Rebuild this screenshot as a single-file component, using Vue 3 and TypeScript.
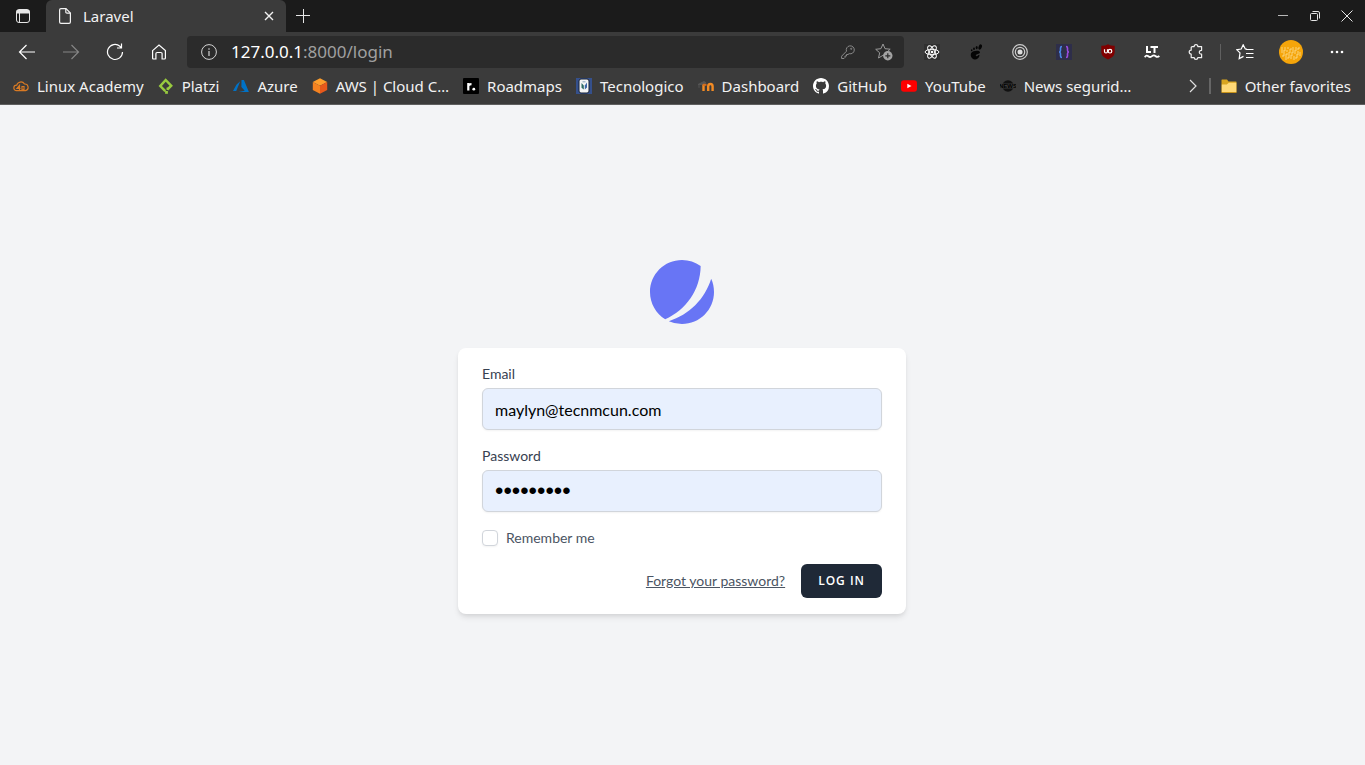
<script setup lang="ts">
import { ref } from 'vue'

interface Bookmark {
  label: string
  icon: string
}

const email = ref('maylyn@tecnmcun.com')
const password = ref('password1')
const remember = ref(false)

const bookmarks: Bookmark[] = [
  { label: 'Linux Academy', icon: 'cloud' },
  { label: 'Platzi', icon: 'platzi' },
  { label: 'Azure', icon: 'azure' },
  { label: 'AWS | Cloud C…', icon: 'aws' },
  { label: 'Roadmaps', icon: 'roadmaps' },
  { label: 'Tecnologico', icon: 'tec' },
  { label: 'Dashboard', icon: 'moodle' },
  { label: 'GitHub', icon: 'github' },
  { label: 'YouTube', icon: 'youtube' },
  { label: 'News segurid…', icon: 'news' },
]

const sparkles = Array.from({ length: 46 }, (_, i) => ({
  x: 3 + ((i * 7) % 19),
  y: 8 + ((i * 5 + Math.floor(i / 6)) % 12),
})).filter((p) => (p.x - 12) ** 2 + (p.y - 12) ** 2 < 100)
</script>

<template>
  <div class="window">
    <header class="chrome">
      <div class="tabbar">
        <button class="workspace" type="button" aria-label="Tab actions">
          <svg width="16" height="16" viewBox="0 0 16 16" fill="none" stroke="#e6e6e6">
            <rect x="1.500" y="1.500" width="13" height="13" rx="2.500" />
            <path d="M2 2.500h12v2.500H2z" fill="#e6e6e6" />
            <path d="M4.500 5v9" />
          </svg>
        </button>
        <div class="tab">
          <svg width="16" height="16" viewBox="0 0 16 16" fill="none" stroke="#f2f2f2" stroke-width="1.200">
            <path d="M4 .6h5L13.400 5v9q0 1.400-1.400 1.400H4Q2.600 15.400 2.600 14V2Q2.600.6 4 .6z" />
            <path d="M8.800.8V4q0 1.200 1.200 1.200h3.200" />
          </svg>
          <span class="tab-title">Laravel</span>
          <button class="tab-close" type="button" aria-label="Close tab">
            <svg width="10" height="10" viewBox="0 0 10 10" stroke="#f2f2f2" stroke-width="1.400">
              <path d="M1 1l8 8M9 1L1 9" />
            </svg>
          </button>
        </div>
        <button class="new-tab" type="button" aria-label="New tab">
          <svg width="14" height="14" viewBox="0 0 14 14" stroke="#e6e6e6"><path d="M7.500 0v14M0 6.500h14" /></svg>
        </button>
        <div class="window-controls">
          <button type="button" aria-label="Minimize">
            <svg width="12" height="12" viewBox="0 0 12 12"><path d="M1 5.500h10" stroke="#b8b8b8" /></svg>
          </button>
          <button type="button" aria-label="Restore">
            <svg width="12" height="12" viewBox="0 0 12 12" fill="none" stroke="#e6e6e6">
              <rect x="1.500" y="3.500" width="7" height="7" rx="1" />
              <path d="M3.500 1.500H9q1.500 0 1.500 1.500v5.500" />
            </svg>
          </button>
          <button type="button" aria-label="Close window">
            <svg width="12" height="12" viewBox="0 0 12 12" stroke="#e6e6e6"><path d="M.5.5l11 11M11.500.5l-11 11" /></svg>
          </button>
        </div>
      </div>

      <nav class="toolbar" aria-label="Browser toolbar">
        <button class="tool" type="button" aria-label="Back">
          <svg width="18" height="16" viewBox="0 0 18 16" fill="none" stroke="#fff" stroke-width="1.200"><path d="M17 8H1.500M8.500 1l-7 7 7 7" /></svg>
        </button>
        <button class="tool" type="button" aria-label="Forward" disabled>
          <svg width="18" height="16" viewBox="0 0 18 16" fill="none" stroke="#858585" stroke-width="1.200"><path d="M1 8h15.500M9.500 1l7 7-7 7" /></svg>
        </button>
        <button class="tool" type="button" aria-label="Refresh">
          <svg width="18" height="18" viewBox="0 0 18 18" fill="none" stroke="#fff" stroke-width="1.200">
            <path d="M16.500 9a7.500 7.500 0 1 1-2.600-5.700L15 4.500M15.500.5v4.500H11" />
          </svg>
        </button>
        <button class="tool" type="button" aria-label="Home">
          <svg width="16" height="16" viewBox="0 0 16 16" fill="none" stroke="#fff" stroke-width="1.200">
            <path d="M1.600 6.600L8 1l6.400 5.600V14q0 1-1 1h-2.300V9.700q0-1.200-1.200-1.200H6.100q-1.200 0-1.200 1.200V15H2.600q-1 0-1-1z" />
          </svg>
        </button>

        <div class="address">
          <svg width="16" height="16" viewBox="0 0 16 16" fill="none" stroke="#d4d4d4">
            <circle cx="8" cy="8" r="7.400" /><path d="M8 7v5M8 4.300v1.400" stroke-width="1.200" />
          </svg>
          <a class="url" href="#"><span class="host">127.0.0.1</span>:8000/login</a>
          <button class="addr-btn" type="button" aria-label="Saved passwords">
            <svg width="14" height="14" viewBox="0 0 14 14" fill="none" stroke="#8a8a8a">
              <path d="M5.500 6.200A4 4 0 1 1 8.200 8.700L7 9.500H5.500V11H4v1.500L3 13.500H.6v-2.300z" stroke-linejoin="round" />
              <circle cx="10.200" cy="3.800" r=".6" />
            </svg>
          </button>
          <button class="addr-btn" type="button" aria-label="Add to favorites">
            <svg width="18" height="18" viewBox="0 0 18 18" fill="none" stroke="#999">
              <path d="M8 1l2 4.700 5.200.5-4 3.500.4 1.800-3.600.8L3.500 15l1.200-5.200-4-3.500 5.200-.6z" stroke-linejoin="round" />
              <circle cx="12.800" cy="12.800" r="4.700" fill="#a3a3a3" stroke="none" />
              <path d="M12.800 10.300v5M10.300 12.800h5" stroke="#2b2b2b" stroke-width="1.200" />
            </svg>
          </button>
        </div>

        <button class="tool" type="button" aria-label="React Developer Tools">
          <svg width="16" height="16" viewBox="0 0 16 16" fill="none" stroke="#fff">
            <rect width="16" height="16" fill="#303030" stroke="none" />
            <ellipse cx="8" cy="8" rx="6.900" ry="2.700" />
            <ellipse cx="8" cy="8" rx="6.900" ry="2.700" transform="rotate(60 8 8)" />
            <ellipse cx="8" cy="8" rx="6.900" ry="2.700" transform="rotate(120 8 8)" />
            <circle cx="8" cy="8" r="1.300" fill="#fff" stroke="none" />
          </svg>
        </button>
        <button class="tool" type="button" aria-label="GNOME Shell integration">
          <svg width="16" height="16" viewBox="0 0 16 16" fill="#050505">
            <path d="M3.200 9C5 6 12.500 6 12 8.500c-.4 1.700-4.400 1.500-4.200 3 .2 1 1.800.8 2.400-.2.600-.8 1.600-.4 1.200.7-.8 2.300-2.700 3.600-4.700 3.400C3.900 15.100 1.800 12 3.200 9z" />
            <ellipse cx="12.200" cy="3" rx="1.600" ry="2.700" transform="rotate(20 12.200 3)" />
            <ellipse cx="8.700" cy="3.600" rx="1" ry="1.600" />
            <ellipse cx="6" cy="4.700" rx=".9" ry="1.200" /><ellipse cx="3.700" cy="6.200" rx=".8" ry="1" />
          </svg>
        </button>
        <button class="tool" type="button" aria-label="Recorder">
          <svg width="16" height="16" viewBox="0 0 16 16" fill="none" stroke="#ccc" stroke-width="1.200">
            <circle cx="8" cy="8" r="7.300" /><circle cx="8" cy="8" r="4.700" /><circle cx="8" cy="8" r="2.500" fill="#ddd" stroke="none" />
          </svg>
        </button>
        <button class="tool" type="button" aria-label="JSON viewer">
          <svg width="16" height="16" viewBox="0 0 16 16" fill="none" stroke-width="1.600">
            <rect width="16" height="16" fill="#2e2e4a" />
            <path d="M6 2.500Q4.500 2.500 4.500 4v2.300Q4.500 8 3 8 4.500 8 4.500 9.700V12q0 1.500 1.500 1.500" stroke="#4a86e8" />
            <path d="M10 2.500Q11.500 2.500 11.500 4v2.300Q11.500 8 13 8 11.500 8 11.500 9.700V12q0 1.500-1.500 1.500" stroke="#9a4be0" />
          </svg>
        </button>
        <button class="tool" type="button" aria-label="uBlock Origin">
          <svg width="16" height="16" viewBox="0 0 16 16" fill="none">
            <path d="M8 .3q3 1.700 6.700 1.500v6.700q-.4 4.300-6.700 7-6.300-2.700-6.700-7V1.800Q5 2 8 .3z" fill="#800000" />
            <path d="M4.500 5.200v2.300q0 1.500 1.500 1.500t1.500-1.500V5.200" stroke="#fff" stroke-width="1.200" />
            <circle cx="10" cy="7.200" r="1.800" stroke="#fff" stroke-width="1.200" />
          </svg>
        </button>
        <button class="tool" type="button" aria-label="LanguageTool">
          <svg width="16" height="16" viewBox="0 0 16 16" fill="none" stroke="#fff" stroke-width="2">
            <path d="M3 2v6h4M6.500 3H14M10.500 3v6" />
            <path d="M.7 13.200q1.700-2.600 3.600-1t3.700 0 3.700 0 3.600-.4" stroke-width="1.800" />
          </svg>
        </button>
        <button class="tool" type="button" aria-label="Extensions">
          <svg width="16" height="16" viewBox="0 0 16 16" fill="none" stroke="#f0f0f0" stroke-width="1.200">
            <path d="M4.200 2.600h2q-.1-1.900 1.800-1.900t1.800 1.900h3.800v3.700q-2.300 0-2.300 1.900t2.300 1.900v3.600H9.800q0 1.700-1.800 1.700t-1.800-1.700h-3V10q-2 0-2-1.900t2-1.900V3.600q0-1 1-1z" stroke-linejoin="round" />
          </svg>
        </button>
        <span class="divider"></span>
        <button class="tool" type="button" aria-label="Favorites">
          <svg width="18" height="16" viewBox="0 0 18 16" fill="none" stroke="#fff">
            <path d="M10.800 5.200L9.300 5 7.200.8 5.200 5 .8 5.700 4 8.900l-.8 5.700L7.500 12.400M10 5.500h7.500M10 9.500h7.500M10 13.500h7.500" stroke-width="1.200" />
          </svg>
        </button>
        <button class="tool profile" type="button" aria-label="Profile">
          <svg width="24" height="24" viewBox="0 0 24 24">
            <circle cx="12" cy="12" r="12" fill="#f5a50a" />
            <circle v-for="(s, i) in sparkles" :key="i" :cx="s.x" :cy="s.y" r=".7" fill="#ffe6a3" />
          </svg>
        </button>
        <button class="tool" type="button" aria-label="Settings and more">
          <svg width="14" height="4" viewBox="0 0 14 4" fill="#fff"><circle cx="2" cy="2" r="1.300" /><circle cx="7" cy="2" r="1.300" /><circle cx="12" cy="2" r="1.300" /></svg>
        </button>
      </nav>

      <nav class="bookmarks" aria-label="Favorites bar">
        <a v-for="b in bookmarks" :key="b.label" class="bookmark" href="#">
          <svg width="16" height="16" viewBox="0 0 16 16" fill="none">
            <g v-if="b.icon === 'cloud'" stroke="#d87a24" stroke-width="1.200">
              <path d="M3.500 12.700a2.700 2.700 0 0 1 .2-5.500A4.300 4.300 0 0 1 11.500 6a3.400 3.400 0 0 1 1 6.700z" />
              <path d="M6.500 12V7.500L4 10.500h3.500M9 8.500v3l2 .5V8.500z" />
            </g>
            <g v-else-if="b.icon === 'platzi'" stroke="#98ca3f" stroke-width="2.500">
              <path d="M9.400 11.600L13.200 7.700 7.700 2 2.300 8l5 5.200" />
              <path d="M8.500 13v2.800" stroke-width="2.800" />
              <path d="M9.600 9.500v2.500" stroke-width="2" />
            </g>
            <g v-else-if="b.icon === 'azure'" fill="#0072c6">
              <path d="M7.200 3.300L3.400 6.700 0 13h3.200z" /><path d="M8.500 2l2.400 0 5 12H5.700l6-1.200L8.400 9z" />
            </g>
            <g v-else-if="b.icon === 'aws'">
              <path d="M8 .2l7.200 3.700L8 7.800.8 3.900z" fill="#ff9e2c" /><path d="M.8 3.900L8 7.800v8L.8 12z" fill="#f58220" /><path d="M15.200 3.900L8 7.800v8l7.200-3.800z" fill="#e8591b" />
            </g>
            <g v-else-if="b.icon === 'roadmaps'">
              <rect width="16" height="16" rx="1" fill="#000" />
              <path d="M5.300 12.500V5M5.300 8q.4-1.800 3.200-1.800" stroke="#fff" stroke-width="2.200" /><circle cx="10.800" cy="11.200" r="1.400" fill="#fff" />
            </g>
            <g v-else-if="b.icon === 'tec'">
              <rect width="16" height="16" fill="#35508c" /><rect x="3" y="1" width="10" height="14" rx="2" fill="#f4f4f4" stroke="#172033" />
              <path d="M5.500 5l2.300 2.500v4L5.500 9.700z" fill="#2b6a63" /><path d="M11 4.500L8.800 7.500v4L11 9.500z" fill="#3d68a8" /><path d="M6.500 3h3v1.500h-3z" fill="#a9bccd" />
            </g>
            <g v-else-if="b.icon === 'moodle'">
              <path d="M0 6.500L6 3.500l2 1.200-3.500 1.800zM1 6.800v3" fill="#555" stroke="#555" />
              <path d="M5.500 13V6.500M10.200 13V8.500q0-2.500 2.200-2.500t2.200 2.500V13" stroke="#f38b24" stroke-width="2.400" />
              <path d="M5 6.800h3.500" stroke="#d66c1d" stroke-width="2" />
            </g>
            <path v-else-if="b.icon === 'github'" fill="#fff" d="M8 0C3.580 0 0 3.580 0 8c0 3.540 2.290 6.530 5.470 7.590.4.070.55-.17.55-.38 0-.19-.01-.82-.01-1.490-2.010.37-2.530-.49-2.690-.94-.09-.23-.48-.94-.82-1.130-.28-.15-.68-.52-.01-.53.63-.01 1.080.58 1.230.82.72 1.210 1.870.87 2.330.66.070-.52.280-.87.510-1.070-1.780-.2-3.640-.89-3.640-3.950 0-.87.310-1.590.82-2.150-.08-.2-.36-1.020.08-2.120 0 0 .67-.21 2.200.82.640-.18 1.320-.27 2-.27s1.360.09 2 .27c1.530-1.040 2.200-.82 2.200-.82.440 1.100.160 1.920.080 2.120.510.560.820 1.270.820 2.150 0 3.070-1.870 3.750-3.650 3.950.290.250.540.730.540 1.480 0 1.070-.01 1.930-.01 2.200 0 .21.150.460.550.380A8.010 8.010 0 0 0 16 8c0-4.420-3.580-8-8-8z" />
            <g v-else-if="b.icon === 'youtube'">
              <rect y="2.300" width="16" height="11.400" rx="3" fill="#f00" /><path d="M6.300 5.700L10.500 8l-4.200 2.300z" fill="#fff" />
            </g>
            <g v-else>
              <circle cx="8" cy="8" r="5.800" fill="#111" />
              <path d="M0 8h16" stroke="#3b3b3b" stroke-width="5" />
              <text x="8" y="10" text-anchor="middle" class="news">NEWS</text>
            </g>
          </svg>
          <span>{{ b.label }}</span>
        </a>
        <button class="overflow" type="button" aria-label="More favorites">
          <svg width="8" height="14" viewBox="0 0 8 14" fill="none" stroke="#e0e0e0" stroke-width="1.200"><path d="M1 1l6 6-6 6" /></svg>
        </button>
        <span class="bar-divider"></span>
        <a class="bookmark" href="#">
          <svg width="16" height="16" viewBox="0 0 16 16">
            <path d="M.5 2q0-.5.500-.5h5l1.500 2h7.500q.5 0 .5.500v10H.5z" fill="#d9a520" />
            <path d="M.8 6.500h5l2-1.800h7.500v9.500H.8z" fill="#ffd977" /><path d="M.5 14.500h15" stroke="#c8931a" />
          </svg>
          <span>Other favorites</span>
        </a>
      </nav>
    </header>

    <main class="page">
      <a class="logo" href="#" aria-label="Home">
        <svg width="64" height="64" viewBox="0 0 48 48" fill="#6875f5">
          <path d="M11.395 44.428C4.557 40.198 0 32.632 0 24 0 10.745 10.745 0 24 0a23.891 23.891 0 0113.997 4.502c-.2 17.907-11.097 33.245-26.602 39.926z" />
          <path d="M14.134 45.885A23.914 23.914 0 0024 48c13.255 0 24-10.745 24-24 0-3.516-.756-6.856-2.115-9.866-4.659 15.143-16.608 27.092-31.750 31.751z" />
        </svg>
      </a>
      <form class="card" @submit.prevent>
        <div class="field">
          <label for="email">Email</label>
          <input id="email" v-model="email" type="email" autocomplete="off" />
        </div>
        <div class="field">
          <label for="password">Password</label>
          <input id="password" v-model="password" type="password" autocomplete="off" />
        </div>
        <label class="remember" for="remember">
          <input id="remember" v-model="remember" type="checkbox" />
          <span>Remember me</span>
        </label>
        <div class="actions">
          <a href="#">Forgot your password?</a>
          <button type="submit">Log in</button>
        </div>
      </form>
    </main>
  </div>
</template>

<style>
body {
  margin: 0;
}
</style>

<style scoped>
.window {
  min-height: 100vh;
  display: flex;
  flex-direction: column;
  background: #f3f4f6;
}
.window * {
  box-sizing: border-box;
}
.chrome {
  background: #3b3b3b;
  border-bottom: 1px solid #5f5f5f;
  color: #f2f2f2;
  font: 15px/19px "Noto Sans", "Open Sans", sans-serif;
}
.chrome button {
  display: flex;
  align-items: center;
  justify-content: center;
  padding: 0;
  border: 0;
  background: none;
}
.chrome svg {
  display: block;
  flex: none;
}
.tabbar {
  display: flex;
  height: 32px;
  background: #1b1b1b;
}
.tabbar .workspace {
  width: 46px;
}
.tab {
  display: flex;
  align-items: center;
  width: 240px;
  padding: 0 12px 0 11px;
  border-radius: 6px 6px 0 0;
  background: #3b3b3b;
}
.tab-title {
  flex: 1;
  margin-left: 10px;
}
.tabbar .new-tab {
  width: 34px;
}
.window-controls {
  display: flex;
  margin-left: auto;
  padding-right: 2px;
}
.window-controls button {
  width: 32px;
}
.toolbar {
  display: flex;
  align-items: center;
  height: 40px;
  padding: 0 6px 0 5px;
}
.toolbar .tool {
  width: 44px;
  height: 32px;
}
.toolbar .profile {
  width: 48px;
}
.address {
  display: flex;
  flex: 1;
  align-items: center;
  height: 32px;
  margin: 0 6px;
  padding: 0 2px 0 14px;
  border-radius: 4px;
  background: #2b2b2b;
}
.url {
  flex: 1;
  margin-left: 14px;
  color: #a0a0a0;
  font-size: 17px;
  line-height: 20px;
  text-decoration: none;
}
.host {
  color: #fff;
}
.address .addr-btn {
  width: 36px;
  height: 32px;
}
.divider {
  width: 1px;
  height: 16px;
  margin: 0 2px;
  background: #606060;
}
.bookmarks {
  display: flex;
  align-items: center;
  height: 32px;
  padding: 0 14px 4px 13px;
}
.bookmark {
  display: flex;
  align-items: center;
  gap: 8px;
  margin-right: 14px;
  color: #f2f2f2;
  text-decoration: none;
  white-space: nowrap;
}
.bookmark:last-child {
  margin-right: 0;
}
.news {
  fill: #000;
  font: bold 6px "Liberation Sans", sans-serif;
}
.bookmarks .overflow {
  width: 16px;
  height: 20px;
  margin-left: auto;
}
.bar-divider {
  width: 2px;
  height: 16px;
  margin: 0 10px 0 8px;
  background: #666;
}
.page {
  flex: 1;
  display: flex;
  flex-direction: column;
  align-items: center;
  justify-content: center;
  padding: 4px 1px 0 0;
  font: 14px/20px Lato, "Open Sans", sans-serif;
}
.logo svg {
  display: block;
}
.card {
  display: flex;
  flex-direction: column;
  gap: 16px;
  width: 100%;
  max-width: 448px;
  margin-top: 24px;
  padding: 16px 24px;
  border-radius: 8px;
  background: #fff;
  box-shadow: 0 4px 6px -1px rgba(0, 0, 0, 0.1), 0 2px 4px -1px rgba(0, 0, 0, 0.06);
}
.field {
  display: flex;
  flex-direction: column;
  gap: 4px;
}
.field label {
  color: #374151;
}
.field input {
  height: 42px;
  padding: 8px 12px;
  border: 1px solid #d1d5db;
  border-radius: 6px;
  outline: none;
  background: #e8f0fe;
  color: #000;
  font: 16px/24px Lato, "Open Sans", sans-serif;
  box-shadow: 0 1px 2px rgba(0, 0, 0, 0.05);
}
.field input[type="password"] {
  font: 24px/24px "Liberation Sans", sans-serif;
}
.remember {
  display: flex;
  align-items: center;
  gap: 8px;
  color: #4b5563;
}
.remember input {
  appearance: none;
  width: 16px;
  height: 16px;
  margin: 0;
  border: 1px solid #d1d5db;
  border-radius: 4px;
  background: #fff;
  box-shadow: 0 1px 2px rgba(0, 0, 0, 0.05);
}
.remember input:checked {
  background: #6875f5;
}
.actions {
  display: flex;
  align-items: center;
  justify-content: flex-end;
  gap: 16px;
}
.actions a {
  color: #4b5563;
  text-decoration: underline;
}
.actions button {
  height: 34px;
  padding: 0 16px;
  border: 1px solid transparent;
  border-radius: 6px;
  background: #1f2937;
  color: #fff;
  font: 600 12px/16px "Open Sans", "Noto Sans", sans-serif;
  letter-spacing: 1px;
  text-transform: uppercase;
}
</style>
